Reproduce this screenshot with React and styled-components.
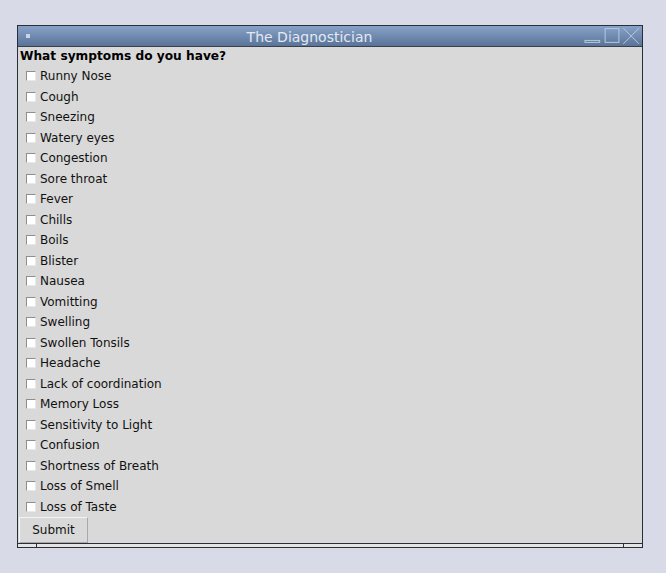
import React from "react";
import styled, { createGlobalStyle } from "styled-components";

const GlobalStyle = createGlobalStyle`
	body {
		margin: 0;
		background: #d9dae8;
		font-family: "DejaVu Sans", sans-serif;
	}
`;

const symptoms = [
	"Runny Nose",
	"Cough",
	"Sneezing",
	"Watery eyes",
	"Congestion",
	"Sore throat",
	"Fever",
	"Chills",
	"Boils",
	"Blister",
	"Nausea",
	"Vomitting",
	"Swelling",
	"Swollen Tonsils",
	"Headache",
	"Lack of coordination",
	"Memory Loss",
	"Sensitivity to Light",
	"Confusion",
	"Shortness of Breath",
	"Loss of Smell",
	"Loss of Taste",
];

// window frame with title bar
function App() {
	return (
		<>
			<GlobalStyle />
			<Window>
				<TitleBar>
					<MenuDot />
					<Title>The Diagnostician</Title>
					<Controls>
						<svg width="60" height="20" viewBox="0 0 60 20">
							<rect x="2" y="14.5" width="15" height="2" fill="none" stroke="#b9c8de" strokeWidth="1" />
							<rect x="22.5" y="2.5" width="14" height="14" fill="none" stroke="#b9c8de" strokeWidth="1" />
							<path d="M41 2 L57 18 M57 2 L41 18" stroke="#b9c8de" strokeWidth="1" />
						</svg>
					</Controls>
				</TitleBar>
				<Content>
					<Question>What symptoms do you have?</Question>
					{symptoms.map((s) => (
						<Row key={s}>
							<Box />
							<span>{s}</span>
						</Row>
					))}
					<Button>Submit</Button>
				</Content>
				<Scroller>
					<Arrow />
					<Track />
					<Arrow $right />
				</Scroller>
			</Window>
		</>
	);
}

const Window = styled.div`
	margin: 25px 0 0 17px;
	width: 624px;
	border: 1px solid #2a2e36;
	background: #d9d9d9;
	display: flex;
	flex-direction: column;
`;
const TitleBar = styled.div`
	height: 20px;
	display: flex;
	align-items: center;
	background: linear-gradient(#87a2c9, #5a7498);
	border-bottom: 1px solid #39414f;
`;
const MenuDot = styled.div`
	width: 4px;
	height: 4px;
	background: #c8d5e8;
	margin: 0 6px 0 8px;
`;
const Title = styled.div`
	flex: 1;
	text-align: center;
	color: #e3e9f3;
	font-size: 14px;
	padding-top: 1px;
`;
const Controls = styled.div`
	width: 59px;
	height: 20px;
	display: flex;
`;
const Content = styled.div`
	display: flex;
	flex-direction: column;
	align-items: flex-start;
	padding: 0 0 0 1px;
`;
const Question = styled.div`
	height: 19px;
	line-height: 19px;
	font-weight: bold;
	font-size: 12.2px;
	color: #000;
	padding-left: 1px;
`;
const Row = styled.div`
	height: 20.5px;
	display: flex;
	align-items: center;
	font-size: 12px;
	color: #111;
	padding-left: 7px;
	gap: 4px;
`;
const Box = styled.div`
	width: 8px;
	height: 8px;
	background: #ffffff;
	border-top: 1px solid #8e8e8e;
	border-left: 1px solid #8e8e8e;
	border-right: 1px solid #e8e8e8;
	border-bottom: 1px solid #e8e8e8;
`;
const Button = styled.button`
	margin-top: 0;
	width: 69px;
	height: 26px;
	font-family: "DejaVu Sans", sans-serif;
	font-size: 12px;
	color: #111;
	background: #d9d9d9;
	border: 1px solid;
	border-color: #f4f4f4 #a8a8a8 #a8a8a8 #f4f4f4;
	padding: 0;
`;
const Scroller = styled.div`
	height: 3px;
	border-top: 1px solid #2a2e36;
	display: flex;
	background: #e4e4e4;
`;
const Arrow = styled.div`
	width: 18px;
	${(p) => (p.$right ? "border-left" : "border-right")}: 1px solid #2a2e36;
`;
const Track = styled.div`
	flex: 1;
`;

export default App;
